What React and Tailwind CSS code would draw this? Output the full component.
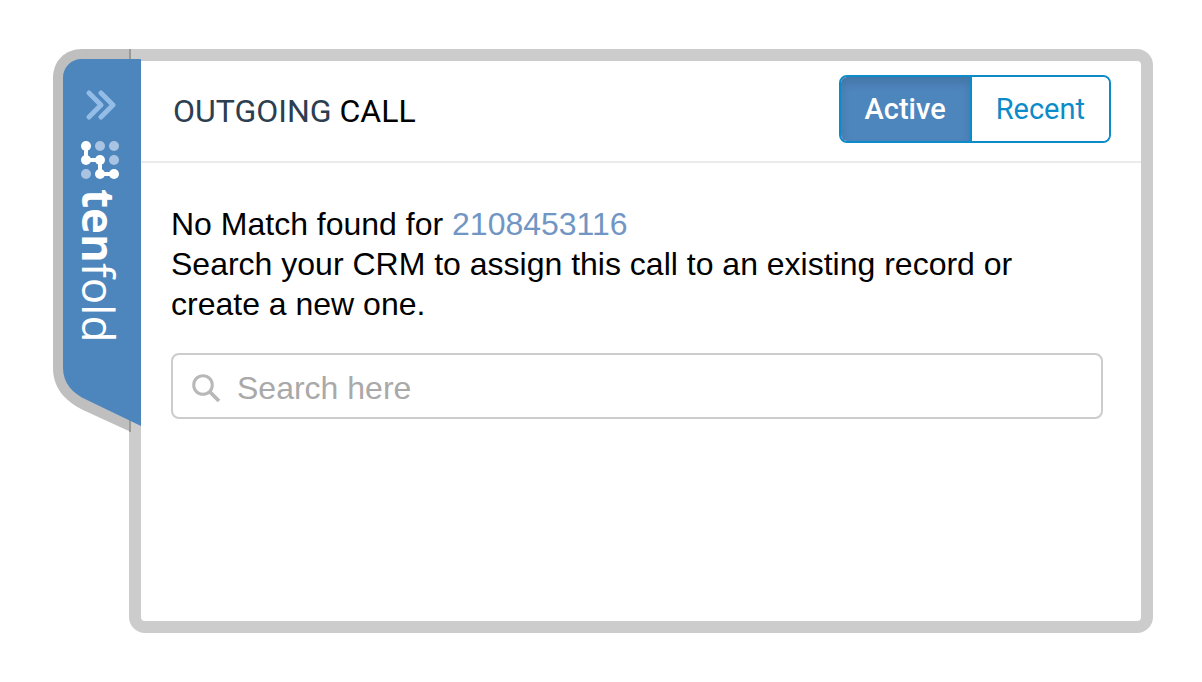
import { useState } from 'react';
import clsx from 'clsx';

const dots = [
  { x: 5, y: 5, on: true }, { x: 19, y: 5 }, { x: 33, y: 5 },
  { x: 5, y: 19, on: true }, { x: 19, y: 19, on: true }, { x: 33, y: 19 },
  { x: 5, y: 33 }, { x: 19, y: 33, on: true }, { x: 33, y: 33, on: true },
];

function SideTab({ onClick }) {
  return (
    <button
      type="button"
      onClick={onClick}
      aria-label="tenfold"
      className="relative z-10 -mr-3 flex h-[384px] w-[88px] shrink-0 cursor-pointer flex-col items-center self-start pt-10 pl-[6px]"
    >
      {/* Tab outline */}
      <svg className="absolute inset-0" width="88" height="384" viewBox="0 0 88 384" aria-hidden="true">
        <path d="M78 0H29C12 0 0 12 0 29V319C0 339 12 352 30 361L78 383Z" fill="#bfbfbf" />
        <path d="M77 0V383" stroke="#9a9a9a" strokeWidth="2" />
        <path d="M88 10H29C18 10 10 18 10 29V319C10 334 20 345 34 351L88 377Z" fill="#4d85bd" />
      </svg>

      <svg className="relative" width="32" height="32" viewBox="0 0 32 32" fill="none" stroke="#93bce6" strokeWidth="5" strokeLinecap="round" strokeLinejoin="round" aria-hidden="true">
        <path d="M5 4L17 16L5 28" />
        <path d="M17 4L29 16L17 28" />
      </svg>

      <svg className="relative mt-5" width="38" height="38" viewBox="0 0 38 38" aria-hidden="true">
        <path d="M5 5V19H19V33H33" fill="none" stroke="#fff" strokeWidth="4" />
        {dots.map((d) => (
          <circle key={`${d.x}-${d.y}`} cx={d.x} cy={d.y} r="5" fill={d.on ? '#fff' : '#a9c4e2'} />
        ))}
      </svg>

      <span className="relative mt-[10px] mr-[2px] font-['Open_Sans',sans-serif] text-[44px] leading-[44px] text-white [writing-mode:vertical-rl]">
        <b className="font-bold">ten</b>fold
      </span>
    </button>
  );
}

function SearchIcon() {
  return (
    <svg className="shrink-0" width="30" height="30" viewBox="0 0 30 30" fill="none" stroke="#b8b8b8" aria-hidden="true">
      <circle cx="12" cy="12" r="9.3" strokeWidth="3" />
      <path d="M18.5 18.5L28 28" strokeWidth="3.8" />
    </svg>
  );
}

export default function App() {
  const [open, setOpen] = useState(true);
  const [tab, setTab] = useState('Active');
  const [query, setQuery] = useState('');

  return (
    <div className="flex min-h-screen bg-white py-[49px] pr-[49px] pl-[53px] text-black">
      <SideTab onClick={() => setOpen(!open)} />

      {open && (
        <main className="min-w-0 flex-1 rounded-2xl rounded-tl-none border-12 border-[#ccc] bg-white">
          <header className="flex items-start justify-between border-b-2 border-[#ebebeb] pt-[14px] pr-[30px] pb-[18px] pl-8 font-[Roboto,sans-serif]">
            <h1 className="pt-4 text-[32px] leading-10">
              <span className="text-[#2c3e50]">OUTGOING</span> CALL
            </h1>
            <div className="flex overflow-hidden rounded-lg border-2 border-[#0d8bc8]">
              {['Active', 'Recent'].map((name) => (
                <button
                  key={name}
                  type="button"
                  aria-pressed={tab === name}
                  onClick={() => setTab(name)}
                  className={clsx(
                    'h-16 cursor-pointer px-6 text-[29px] leading-10 first:border-r-2 first:border-[#0d8bc8]',
                    tab === name
                      ? 'bg-[#4d85bd] font-medium text-white shadow-[inset_0_6px_10px_rgba(0,0,0,0.12)]'
                      : 'bg-white font-normal text-[#0d8bc8]',
                  )}
                >
                  {name}
                </button>
              ))}
            </div>
          </header>

          <section className="pt-[41px] pr-[38px] pl-[30px] font-['Liberation_Sans',sans-serif] text-[32px] leading-10">
            <p>
              No Match found for <a href="tel:2108453116" className="text-[#7196c3]">2108453116</a>
              <br />
              Search your CRM to assign this call to an existing record or create a new one.
            </p>

            <label className="mt-[29px] flex h-[66px] items-center gap-4 rounded-lg border-2 border-[#ccc] pt-[3px] pr-4 pl-[18px]">
              <SearchIcon />
              <input
                type="text"
                aria-label="Search here"
                placeholder="Search here"
                value={query}
                onChange={(e) => setQuery(e.target.value)}
                className="min-w-0 flex-1 bg-transparent outline-none placeholder:text-[#a9a9a9]"
              />
            </label>
          </section>
        </main>
      )}
    </div>
  );
}
